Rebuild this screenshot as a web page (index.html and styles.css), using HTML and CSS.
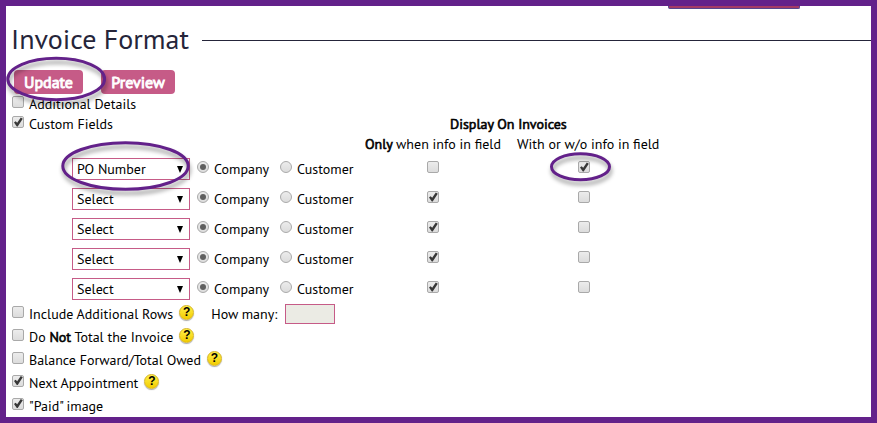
FILE: index.html
```html
<!DOCTYPE html>
<html lang="en">
<head>
  <meta charset="UTF-8" />
  <title>Invoice Format</title>
  <link rel="stylesheet" href="styles.css">
</head>
<body>

  <div class="tab-edge"></div>

  <!-- Section heading -->
  <div class="heading">
    <h1>Invoice Format</h1>
    <span class="rule"></span>
  </div>

  <form id="invoiceForm">
    <div class="buttons">
      <button type="submit" class="btn btn-update">Update</button>
      <button type="button" class="btn btn-preview">Preview</button>
    </div>

    <div class="top-options">
      <label class="option wide"><input type="checkbox"><span>Additional Details</span></label>
      <label class="option"><input type="checkbox" checked><span>Custom Fields</span></label>
      <div class="display-title">Display On Invoices</div>
      <div class="only-title"><b>Only</b> when info in field</div>
      <div class="both-title">With or w/o info in field</div>
    </div>

    <!-- Custom fields -->
    <div class="fields">
      <div class="field-row">
        <div class="select"><select><option>PO Number</option></select></div>
        <label class="company"><input type="radio" name="type1" checked><span>Company</span></label>
        <label class="customer"><input type="radio" name="type1"><span>Customer</span></label>
        <input type="checkbox">
        <input type="checkbox" checked>
      </div>
      <div class="field-row">
        <div class="select"><select><option>Select</option></select></div>
        <label class="company"><input type="radio" name="type2" checked><span>Company</span></label>
        <label class="customer"><input type="radio" name="type2"><span>Customer</span></label>
        <input type="checkbox" checked>
        <input type="checkbox">
      </div>
      <div class="field-row">
        <div class="select"><select><option>Select</option></select></div>
        <label class="company"><input type="radio" name="type3" checked><span>Company</span></label>
        <label class="customer"><input type="radio" name="type3"><span>Customer</span></label>
        <input type="checkbox" checked>
        <input type="checkbox">
      </div>
      <div class="field-row">
        <div class="select"><select><option>Select</option></select></div>
        <label class="company"><input type="radio" name="type4" checked><span>Company</span></label>
        <label class="customer"><input type="radio" name="type4"><span>Customer</span></label>
        <input type="checkbox" checked>
        <input type="checkbox">
      </div>
      <div class="field-row">
        <div class="select"><select><option>Select</option></select></div>
        <label class="company"><input type="radio" name="type5" checked><span>Company</span></label>
        <label class="customer"><input type="radio" name="type5"><span>Customer</span></label>
        <input type="checkbox" checked>
        <input type="checkbox">
      </div>
    </div>

    <!-- Other options -->
    <div class="more-options">
      <div class="option">
        <input type="checkbox"><span>Include Additional Rows</span><i class="help">?</i>
        <span class="how-many">How many:</span><input type="text" class="count" disabled>
      </div>
      <div class="option"><input type="checkbox"><span>Do <b>Not</b> Total the Invoice</span><i class="help">?</i></div>
      <div class="option"><input type="checkbox"><span>Balance Forward/Total Owed</span><i class="help">?</i></div>
      <div class="option"><input type="checkbox" checked><span>Next Appointment</span><i class="help">?</i></div>
      <div class="option"><input type="checkbox" checked><span>"Paid" image</span></div>
    </div>
  </form>

  <!-- Highlight rings -->
  <svg class="rings" width="877" height="423" viewBox="0 0 877 423">
    <ellipse cx="56.2" cy="79" rx="48.4" ry="20.7" />
    <ellipse cx="125.5" cy="166" rx="62.7" ry="23.3" />
    <ellipse cx="580.5" cy="166.7" rx="29" ry="13" />
  </svg>

</body>
</html>
```

FILE: styles.css
```css
* {
  box-sizing: border-box;
}

body {
  position: relative;
  width: 877px;
  height: 423px;
  margin: 0;
  border: 6px solid #63218a;
  background: #fff;
  color: #000;
  font-family: "PT Sans", "Open Sans", "Noto Sans", sans-serif;
  font-size: 14px;
  line-height: 20px;
  overflow: hidden;
}

b {
  font-weight: normal;
  -webkit-text-stroke: 0.6px #000;
}

.tab-edge {
  width: 132px;
  height: 3px;
  margin-left: 662px;
  background: #a33a66;
  border: 1px solid #56468f;
  border-top: none;
  border-radius: 0 0 2px 2px;
}

.heading {
  display: flex;
  height: 61px;
}

h1 {
  width: 191px;
  margin: 10px 0 0 5px;
  color: #25253a;
  font-size: 28px;
  font-weight: normal;
  line-height: 40px;
  white-space: nowrap;
}

.rule {
  flex: 1;
  height: 1px;
  margin-top: 31px;
  background: #25253a;
}

.buttons {
  display: flex;
  gap: 18px;
  height: 24px;
  margin-left: 8px;
}

.btn {
  height: 24px;
  padding: 0 0 1px;
  border: none;
  border-radius: 4px;
  background: #c65b87;
  color: #fff;
  font: 16px/24px "PT Sans", "Open Sans", "Noto Sans", sans-serif;
  -webkit-text-stroke: 0.9px #fff;
}

.btn-update {
  width: 69px;
}

.btn-preview {
  width: 74px;
}

.top-options {
  display: grid;
  grid-template-columns: 359px 137px 15px 142px;
  grid-template-rows: 20px 20px 20px;
  white-space: nowrap;
}

.wide {
  grid-column: 1 / 5;
}

.display-title {
  grid-column: 2 / 5;
  padding-left: 85px;
  -webkit-text-stroke: 0.6px #000;
}

.only-title {
  grid-column: 2;
}

.both-title {
  grid-column: 4;
}

.option {
  display: flex;
  align-items: center;
  padding-left: 6px;
  white-space: nowrap;
}

.option span {
  margin-left: 5px;
}

input[type="checkbox"],
input[type="radio"] {
  appearance: none;
  flex: none;
  width: 12px;
  height: 12px;
  margin: -4px 0 0;
  border: 1px solid #a9a9a9;
  border-radius: 2px;
  background: linear-gradient(#ececec, #dcdcdc);
}

input[type="radio"] {
  display: grid;
  place-items: center;
  border-radius: 50%;
}

input[type="radio"]:checked::before {
  content: "";
  width: 6px;
  height: 6px;
  border-radius: 50%;
  background: #606060;
}

input[type="checkbox"]:checked::before {
  content: "";
  display: block;
  width: 10px;
  height: 10px;
  background: #383838;
  clip-path: polygon(10% 56%, 26% 42%, 42% 58%, 78% 5%, 98% 18%, 47% 94%, 38% 94%);
}

.field-row {
  display: grid;
  grid-template-columns: 118px 7px 83px 141px 151px 12px;
  align-items: center;
  height: 30px;
  padding-left: 66px;
}

.field-row label {
  display: flex;
  align-items: center;
  gap: 5px;
}

.company {
  grid-column: 3;
}

.customer {
  width: 80px;
}

.field-row > input[type="checkbox"] {
  margin-left: 6px;
}

.select {
  display: flex;
  align-items: center;
  height: 22px;
  border: 1px solid #c65b87;
  background: #fff;
}

.select select {
  appearance: none;
  width: 104px;
  padding: 0 0 0 4px;
  border: none;
  background: none;
  color: #000;
  font: inherit;
}

.select::after {
  content: "";
  border: 3.5px solid transparent;
  border-top: 7px solid #000;
  border-bottom: none;
}

.more-options .option {
  height: 23px;
}

.more-options .option span {
  padding-top: 1px;
}

.more-options {
  margin-top: -2px;
}

.help {
  width: 15px;
  height: 15px;
  margin: -3px 0 0 6px;
  border: 1px solid #d6b426;
  border-radius: 50%;
  background: linear-gradient(#fff04a, #f2cc00);
  box-shadow: 0 1px 1px #aaa;
  font: bold 12px/13px "Liberation Sans", sans-serif;
  text-align: center;
}

.option .how-many {
  margin-left: 17px;
}

.count {
  width: 50px;
  height: 20px;
  margin-left: 8px;
  border: 1px solid #c65b87;
  background: #ebebe4;
}

.rings {
  position: absolute;
  top: -6px;
  left: -6px;
  fill: none;
  stroke: #63218a;
  stroke-width: 3px;
  filter: drop-shadow(1px 4px 2px rgba(0, 0, 0, 0.4));
  pointer-events: none;
}
```
